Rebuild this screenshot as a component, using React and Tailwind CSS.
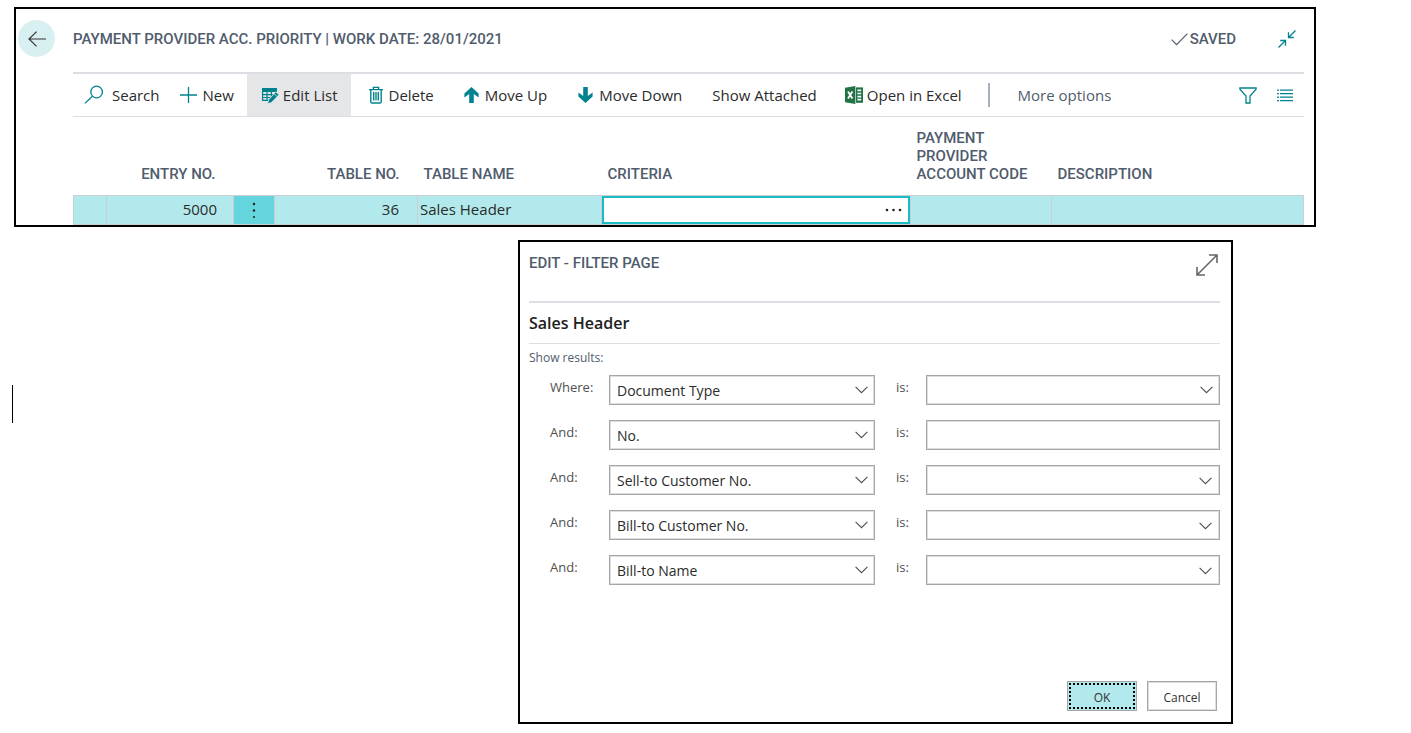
import React from "react";

const svgBase = { fill: "none", stroke: "currentColor", "aria-hidden": true };

const BackIcon = () => (
  <svg {...svgBase} width="18" height="16" viewBox="0 0 18 16" strokeWidth="1.2">
    <path d="M18 8H1M8.6.6L1 8l7.6 7.4" />
  </svg>
);
const SearchIcon = () => (
  <svg {...svgBase} width="20" height="20" viewBox="0 0 20 20" strokeWidth="1.3">
    <circle cx="12.6" cy="7" r="5.8" />
    <path d="M8.4 11.2L1 18.4" />
  </svg>
);
const PlusIcon = () => (
  <svg {...svgBase} width="17" height="18" viewBox="0 0 17 18" strokeWidth="1.3">
    <path d="M8.5 1v16M0 9h17" />
  </svg>
);
const EditListIcon = () => (
  <svg width="17" height="17" viewBox="0 0 17 17" aria-hidden="true">
    <path fill="#00838f" d="M0 1h15v4H0z" />
    <path fill="none" stroke="#00838f" strokeWidth="1.2" d="M.6 4v9.4h6.6M0 7.6h11M0 10.5h8.4M5 4v9.4M9.4 4v6" />
    <path fill="#00838f" stroke="#e5e6e8" strokeWidth=".8" d="M13.8 4.8l3.2 3-7.6 7.8-3.8 1.2 1-4z" />
    <path stroke="#e5e6e8" strokeWidth=".8" d="M12 6.6l3.2 3" />
  </svg>
);
const TrashIcon = () => (
  <svg {...svgBase} width="14" height="18" viewBox="0 0 14 18" strokeWidth="1.4">
    <path d="M0 3.6h14M4.4 3.4V1.4h5.2v2M1.8 4v11.7q0 1.3 1.3 1.3h7.8q1.3 0 1.3-1.3V4M4.7 6v8.6M7 6v8.6M9.3 6v8.6" />
  </svg>
);
const UpIcon = () => (
  <svg width="15" height="16" viewBox="0 0 15 16" fill="currentColor" aria-hidden="true">
    <path d="M7.5 0L14.6 6.6v4L9.8 7v9H5.2V7L.4 10.6v-4z" />
  </svg>
);
const DownIcon = () => (
  <svg width="15" height="16" viewBox="0 0 15 16" fill="currentColor" aria-hidden="true">
    <path d="M7.5 16L14.6 9.4v-4L9.8 9V0H5.2v9L.4 5.4v4z" />
  </svg>
);
const ExcelIcon = () => (
  <svg width="18" height="18" viewBox="0 0 18 18" aria-hidden="true">
    <path fill="#217346" d="M0 1.8L10.4 0v18L0 16.2z" />
    <path fill="#217346" d="M11 1.4h7v15.4h-7z" />
    <path stroke="#fff" strokeWidth="1.7" d="M12.4 4.4h3.8M12.4 7.5h3.8M12.4 10.6h3.8M12.4 13.7h3.8" />
    <path stroke="#fff" strokeWidth="1.8" d="M3 5.4l4.4 7M7.4 5.4L3 12.4" />
  </svg>
);
const CheckIcon = () => (
  <svg {...svgBase} width="17" height="13" viewBox="0 0 17 13" strokeWidth="1.2">
    <path d="M.6 6.6l5 5L16.4.6" />
  </svg>
);
const CollapseIcon = () => (
  <svg {...svgBase} width="18" height="18" viewBox="0 0 18 18" strokeWidth="1.3">
    <path d="M17.5.5l-7 7M10.5 2.2v5.3h5.3M.5 17.5l7-7M2.2 10.5h5.3v5.3" />
  </svg>
);
const ExpandIcon = () => (
  <svg {...svgBase} width="22" height="22" viewBox="0 0 22 22" strokeWidth="1.6">
    <path d="M1 21L21 1M13 1h8v8M1 13v8h8" />
  </svg>
);
const FilterIcon = () => (
  <svg {...svgBase} width="18" height="17" viewBox="0 0 18 17" strokeWidth="1.3">
    <path d="M.9 1h16.2v1.2L11 9v7H7V9L.9 2.2z" />
  </svg>
);
const ListIcon = () => (
  <svg {...svgBase} width="16" height="13" viewBox="0 0 16 13" strokeWidth="1.3">
    <path d="M0 1.2h2M3 1.2h13M0 4.7h2M3 4.7h13M0 8.2h2M3 8.2h13M0 11.7h2M3 11.7h13" />
  </svg>
);
const Chevron = () => (
  <svg {...svgBase} width="13" height="8" viewBox="0 0 13 8" strokeWidth="1.1">
    <path d="M.6.8l5.9 5.9L12.4.8" />
  </svg>
);

const heading = "font-['Roboto',sans-serif] font-medium text-[15px] text-[#505c6d]";

function ToolButton({ icon, children, className = "gap-1.5 px-[15px]" }) {
  return (
    <button type="button" className={`flex h-full items-center whitespace-nowrap ${className}`}>
      {icon && <span className="text-[#00838f]">{icon}</span>}
      {children}
    </button>
  );
}

function PriorityPage() {
  const th = "px-1.5 pb-3 align-bottom text-left font-medium";
  const td = "border border-[#c9d0d4] py-0";
  return (
    <section className="mr-[81px] flex border-2 border-black">
      <button
        type="button"
        aria-label="Back"
        className="mt-[11px] ml-0.5 flex size-[37px] shrink-0 items-center justify-center rounded-full bg-[#d9f0f2] text-[#333]"
      >
        <BackIcon />
      </button>
      <div className="mr-2.5 ml-[18px] min-w-0 flex-1">
        <header className={`flex h-[63px] items-start justify-between pt-5 ${heading}`}>
          <h1 className="leading-5">PAYMENT PROVIDER ACC. PRIORITY | WORK DATE: 28/01/2021</h1>
          <div className="flex items-center pr-2 leading-5">
            <CheckIcon />
            <span className="ml-0.5">SAVED</span>
            <button type="button" aria-label="Collapse" className="ml-[42px] text-[#00838f]">
              <CollapseIcon />
            </button>
          </div>
        </header>
        <div className="flex h-[45px] items-center border-t-2 border-b border-[#dcdee3] text-[15px] text-[#2b2b2b]">
          <ToolButton icon={<SearchIcon />} className="gap-2 pr-2.5 pl-[11px]">Search</ToolButton>
          <ToolButton icon={<PlusIcon />} className="gap-1.5 pr-[13px] pl-2.5">New</ToolButton>
          <ToolButton icon={<EditListIcon />} className="gap-1 bg-[#e5e6e8] pr-[13px] pl-[15px]">Edit List</ToolButton>
          <ToolButton icon={<TrashIcon />} className="gap-1.5 pr-[15px] pl-[18px]">Delete</ToolButton>
          <ToolButton icon={<UpIcon />}>Move Up</ToolButton>
          <ToolButton icon={<DownIcon />} className="gap-1.5 pr-[15px] pl-4">Move Down</ToolButton>
          <ToolButton>Show Attached</ToolButton>
          <ToolButton icon={<ExcelIcon />} className="gap-1 px-[13px]">Open in Excel</ToolButton>
          <span className="ml-[13px] h-6 w-0.5 bg-[#a9b0bd]" />
          <ToolButton className="pr-4 pl-7 text-[#505c6d]">More options</ToolButton>
          <div className="ml-auto flex gap-5 pr-[11px] text-[#00838f]">
            <button type="button" aria-label="Filter"><FilterIcon /></button>
            <button type="button" aria-label="Show as list"><ListIcon /></button>
          </div>
        </div>
        <table className="w-full table-fixed border-collapse text-[15px] text-[#2b2b2b]">
          <colgroup>
            <col className="w-[33px]" />
            <col className="w-[127px]" />
            <col className="w-[41px]" />
            <col className="w-[143px]" />
            <col className="w-[184px]" />
            <col className="w-[309px]" />
            <col className="w-[141px]" />
            <col />
          </colgroup>
          <thead>
            <tr className={`h-[78px] leading-[18px] ${heading}`}>
              <td />
              <th scope="col" className="pr-[18px] pb-3 text-right align-bottom font-medium">ENTRY NO.</th>
              <td />
              <th scope="col" className="pr-[18px] pb-3 text-right align-bottom font-medium">TABLE NO.</th>
              <th scope="col" className={th}>TABLE NAME</th>
              <th scope="col" className={th}>CRITERIA</th>
              <th scope="col" className={th}>PAYMENT PROVIDER ACCOUNT CODE</th>
              <th scope="col" className={th}>DESCRIPTION</th>
            </tr>
          </thead>
          <tbody>
            <tr className="h-[29px] bg-[#b2e9ec]">
              <td className={td} />
              <td className={`${td} pr-4 text-right`}>5000</td>
              <td className={`${td} bg-[#64d5dc]`}>
                <button type="button" aria-label="Row actions" className="flex h-7 w-full items-center justify-center">
                  <svg width="4" height="16" viewBox="0 0 4 16" fill="#212121" aria-hidden="true">
                    <circle cx="2" cy="2" r="1.2" /><circle cx="2" cy="8.5" r="1.2" /><circle cx="2" cy="15" r="1" />
                  </svg>
                </button>
              </td>
              <td className={`${td} pr-[18px] text-right`}>36</td>
              <td className={`${td} pl-0.5`}>Sales Header</td>
              <td className={td}>
                <div className="flex h-7 items-center border-2 border-[#1bbac6] bg-white">
                  <input aria-label="Criteria" className="h-full min-w-0 flex-1 px-1 outline-none" />
                  <button type="button" aria-label="Look up criteria" className="px-1.5">
                    <svg width="17" height="4" viewBox="0 0 17 4" fill="#212121" aria-hidden="true">
                      <circle cx="2" cy="2" r="1.3" /><circle cx="8.5" cy="2" r="1.3" /><circle cx="15" cy="2" r="1.3" />
                    </svg>
                  </button>
                </div>
              </td>
              <td className={td} />
              <td className={td} />
            </tr>
          </tbody>
        </table>
      </div>
    </section>
  );
}

const filters = [
  { field: "Document Type", kind: "select" },
  { field: "No.", kind: "text" },
  { field: "Sell-to Customer No.", kind: "lookup" },
  { field: "Bill-to Customer No.", kind: "lookup" },
  { field: "Bill-to Name", kind: "lookup" },
];

const box =
  "h-[30px] w-full appearance-none border border-[#a6a6a6] bg-white px-[7px] pt-0.5 text-[14px] text-[#2b2b2b] shadow-[inset_0_0_0_1px_#dedede] outline-none";

function FilterRow({ field, kind, first, index }) {
  return (
    <div className="grid grid-cols-[59px_266fr_51px_294fr] pl-[21px] text-[13px] leading-6 text-[#505050]">
      <label htmlFor={`field-${index}`}>{first ? "Where:" : "And:"}</label>
      <div className="relative">
        <select id={`field-${index}`} defaultValue={field} className={box}>
          {filters.map((f) => <option key={f.field}>{f.field}</option>)}
        </select>
        <span className="pointer-events-none absolute top-[11px] right-[7px]"><Chevron /></span>
      </div>
      <label htmlFor={`value-${index}`} className="pl-[21px]">is:</label>
      <div className="relative">
        {kind === "select" ? (
          <select id={`value-${index}`} defaultValue="" className={box}>
            <option value="" />
          </select>
        ) : (
          <input id={`value-${index}`} className={box} />
        )}
        {kind === "select" && (
          <span className="pointer-events-none absolute top-[11px] right-[7px]"><Chevron /></span>
        )}
        {kind === "lookup" && (
          <button type="button" aria-label={`Choose ${field}`} className="absolute top-3 right-2"><Chevron /></button>
        )}
      </div>
    </div>
  );
}

function FilterDialog() {
  return (
    <section className="border-2 border-black pr-[11px] pb-[11px] pl-[9px]">
      <header className={`flex h-[61px] items-start justify-between border-b-2 border-[#dcdee3] ${heading}`}>
        <h2 className="pt-[11px] leading-5">EDIT - FILTER PAGE</h2>
        <button type="button" aria-label="Expand" className="mt-3 mr-0.5 text-[#666]"><ExpandIcon /></button>
      </header>
      <h3 className="border-b border-[#dcdfe3] text-base leading-10 font-semibold text-[#212121]">Sales Header</h3>
      <p className="pt-1 text-[12px] leading-5 text-[#505c6d]">Show results:</p>
      <form className="mt-[7px]" onSubmit={(e) => e.preventDefault()}>
        <div className="flex flex-col gap-[15px]">
          {filters.map((f, i) => <FilterRow key={f.field} {...f} first={i === 0} index={i} />)}
        </div>
        <div className="mt-24 flex justify-end gap-2.5 pr-[3px] text-[12px] text-[#333]">
          <button type="submit" className="h-[30px] w-[70px] border border-[#a6a6a6] bg-[#b2e9ec] p-px">
            <span className="flex h-full items-center justify-center border-2 border-dotted border-black pt-1">OK</span>
          </button>
          <button type="button" className="h-[30px] w-[70px] border border-[#a6a6a6] bg-white pt-1 shadow-[inset_0_0_0_1px_#dedede]">Cancel</button>
        </div>
      </form>
    </section>
  );
}

export default function App() {
  return (
    <main className="min-h-screen bg-white px-3.5 pt-[7px] font-['Open_Sans','Noto_Sans',sans-serif]">
      <PriorityPage />
      <div className="mt-[13px] mr-[164px] -ml-0.5 grid grid-cols-[506fr_715fr]">
        <div className="mt-[145px] h-[38px] w-px bg-black" />
        <FilterDialog />
      </div>
    </main>
  );
}
